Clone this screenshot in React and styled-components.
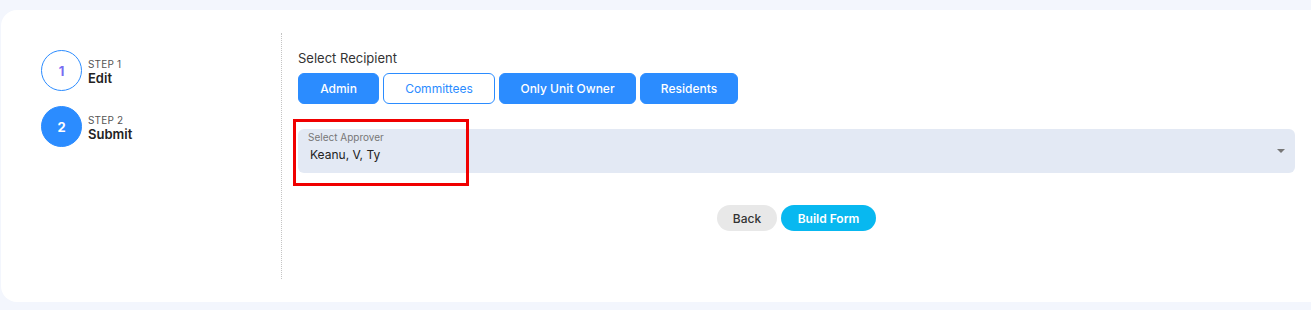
import React from 'react';
import styled, { createGlobalStyle } from 'styled-components';

const GlobalStyle = createGlobalStyle`
  html, body {
    margin: 0;
    padding: 0;
    background: #f3f6fd;
    font-family: Inter, 'Noto Sans', sans-serif;
  }
`;

const recipients = [
  { label: 'Admin', active: true, width: 81 },
  { label: 'Committees', active: false, width: 112 },
  { label: 'Only Unit Owner', active: true, width: 137 },
  { label: 'Residents', active: true, width: 98 },
];

const steps = [
  { num: 1, label: 'Edit', done: false },
  { num: 2, label: 'Submit', done: true },
];

function App() {
  return (
    <>
      <GlobalStyle />
      <Page>
        <Card>
          <Sidebar>
            {steps.map((step) => (
              <Step key={step.num}>
                <StepCircle filled={step.done}>{step.num}</StepCircle>
                <StepText>
                  <StepCaption>STEP {step.num}</StepCaption>
                  <StepLabel>{step.label}</StepLabel>
                </StepText>
              </Step>
            ))}
          </Sidebar>
          <Content>
            <SectionTitle>Select Recipient</SectionTitle>
            <ButtonRow>
              {recipients.map((r) => (
                <RecipientButton key={r.label} active={r.active} style={{ width: r.width }}>
                  {r.label}
                </RecipientButton>
              ))}
            </ButtonRow>
            <SelectWrap>
              <SelectBox>
                <SelectLabel>Select Approver</SelectLabel>
                <SelectValue>Keanu, V, Ty</SelectValue>
                <Caret />
              </SelectBox>
              <Highlight />
            </SelectWrap>
            <Actions>
              <BackButton>Back</BackButton>
              <PrimaryButton>Build Form</PrimaryButton>
            </Actions>
          </Content>
        </Card>
      </Page>
    </>
  );
}

const Page = styled.div`
  height: 310px;
  padding: 10px 0 0 1px;
  box-sizing: border-box;
`;

const Card = styled.div`
  display: flex;
  height: 292px;
  padding: 23px 0;
  box-sizing: border-box;
  background: #ffffff;
  border-radius: 16px 0 0 16px;
`;

const Sidebar = styled.div`
  width: 281px;
  flex-shrink: 0;
  padding: 17px 0 0 40px;
  box-sizing: border-box;
  border-right: 1px dotted #c4c4c4;
  display: flex;
  flex-direction: column;
  gap: 15px;
`;

const Step = styled.div`
  display: flex;
  align-items: center;
  gap: 6px;
`;

const StepCircle = styled.div`
  width: 41px;
  height: 41px;
  box-sizing: border-box;
  border-radius: 50%;
  display: flex;
  align-items: center;
  justify-content: center;
  font-size: 13px;
  font-weight: 700;
  border: 1px solid #2b8cff;
  background: ${(p) => (p.filled ? '#2b8cff' : '#ffffff')};
  color: ${(p) => (p.filled ? '#ffffff' : '#7a6cf2')};
`;

const StepText = styled.div`
  display: flex;
  flex-direction: column;
  margin-top: 4px;
`;

const StepCaption = styled.span`
  font-size: 10px;
  line-height: 12px;
  color: #555;
  letter-spacing: 0.2px;
`;

const StepLabel = styled.span`
  font-size: 13px;
  line-height: 17px;
  font-weight: 600;
  color: #222;
`;

const Content = styled.div`
  flex: 1;
  padding: 17px 16px 0 16px;
  display: flex;
  flex-direction: column;
`;

const SectionTitle = styled.div`
  font-size: 13px;
  line-height: 16px;
  color: #333;
`;

const ButtonRow = styled.div`
  display: flex;
  gap: 4px;
  margin-top: 7px;
`;

const RecipientButton = styled.button`
  height: 31px;
  box-sizing: border-box;
  border-radius: 6px;
  font-family: inherit;
  font-size: 12px;
  font-weight: ${(p) => (p.active ? 500 : 400)};
  border: 1px solid #2b8cff;
  background: ${(p) => (p.active ? '#2b8cff' : '#ffffff')};
  color: ${(p) => (p.active ? '#ffffff' : '#2b8cff')};
  padding: 0;
  cursor: pointer;
`;

const SelectWrap = styled.div`
  position: relative;
  margin-top: 25px;
`;

const SelectBox = styled.div`
  position: relative;
  height: 44px;
  box-sizing: border-box;
  padding: 2px 10px 0 10px;
  background: #e3e9f4;
  border-radius: 6px;
`;

const SelectLabel = styled.div`
  font-size: 10px;
  line-height: 12px;
  color: #777;
`;

const SelectValue = styled.div`
  font-size: 12px;
  line-height: 16px;
  margin-top: 4px;
  padding-left: 2px;
  color: #222;
`;

const Caret = styled.span`
  position: absolute;
  right: 10px;
  top: 20px;
  width: 0;
  height: 0;
  border-left: 4px solid transparent;
  border-right: 4px solid transparent;
  border-top: 4px solid #777;
`;

const Highlight = styled.div`
  position: absolute;
  left: -5px;
  top: -10px;
  width: 176px;
  height: 67px;
  box-sizing: border-box;
  border: 3px solid #f00000;
  pointer-events: none;
`;

const Actions = styled.div`
  display: flex;
  justify-content: center;
  gap: 4px;
  margin-top: 32px;
`;

const PillButton = styled.button`
  height: 26px;
  border: none;
  border-radius: 13px;
  font-family: inherit;
  font-size: 12px;
  cursor: pointer;
  padding: 0;
`;

const BackButton = styled(PillButton)`
  width: 60px;
  background: #e8e8e8;
  color: #333;
  font-weight: 500;
`;

const PrimaryButton = styled(PillButton)`
  width: 95px;
  background: #08b8f0;
  color: #ffffff;
  font-weight: 600;
`;

export default App;
